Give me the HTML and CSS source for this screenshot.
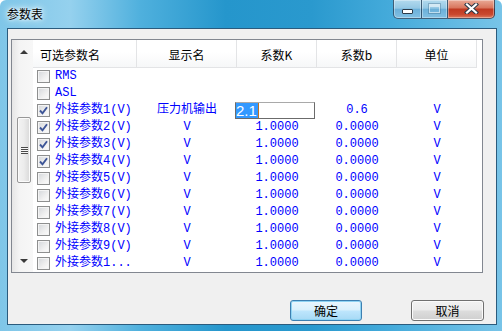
FILE: index.html
```html
<!DOCTYPE html>
<html lang="zh-CN">

<head>
    <meta charset="UTF-8">
    <title>参数表</title>
    <link rel="stylesheet" href="styles.css">
</head>

<body>
    <div class="window">
        <div class="titlebar">
            <span class="title">参数表</span>
            <div class="caption">
                <div class="cbtn cbtn-min"><span class="glyph-min"></span></div>
                <div class="cbtn cbtn-max"><span class="glyph-max"></span></div>
                <div class="cbtn cbtn-close">
                    <svg width="15" height="11" viewBox="0 0 15 11">
                        <path d="M3 1.5 L12 9.5 M12 1.5 L3 9.5" stroke="#2c3a48" stroke-width="4.2" stroke-linecap="square" />
                        <path d="M3 1.5 L12 9.5 M12 1.5 L3 9.5" stroke="#fff" stroke-width="2.2" stroke-linecap="square" />
                    </svg>
                </div>
            </div>
        </div>

        <div class="client">
            <div class="list">
                <!-- scrollbar sits on the left side -->
                <div class="vscroll">
                    <div class="sb-arrow"><i class="up"></i></div>
                    <div class="sb-track">
                        <div class="sb-thumb"><span class="grip"></span></div>
                    </div>
                    <div class="sb-arrow"><i class="down"></i></div>
                </div>

                <div class="grid">
                    <div class="head">
                        <div class="hcell c1 left">可选参数名</div>
                        <div class="hcell c2">显示名</div>
                        <div class="hcell c3">系数K</div>
                        <div class="hcell c4">系数b</div>
                        <div class="hcell c5">单位</div>
                    </div>

                    <div class="row">
                        <div class="c1"><span class="cb"></span>RMS</div>
                        <div class="c2"></div><div class="c3"></div><div class="c4"></div><div class="c5"></div>
                    </div>
                    <div class="row">
                        <div class="c1"><span class="cb"></span>ASL</div>
                        <div class="c2"></div><div class="c3"></div><div class="c4"></div><div class="c5"></div>
                    </div>
                    <div class="row">
                        <div class="c1"><span class="cb on"><svg width="11" height="11" viewBox="0 0 11 11"><path d="M2 5.5 L4.5 8.3 L9 2.2" fill="none" stroke="#3d5597" stroke-width="1.9" /></svg></span>外接参数1(V)</div>
                        <div class="c2">压力机输出</div>
                        <div class="c3 editing"><div class="edit"><span class="sel">2.1</span><span class="caret"></span></div></div>
                        <div class="c4">0.6</div>
                        <div class="c5">V</div>
                    </div>
                    <div class="row">
                        <div class="c1"><span class="cb on"><svg width="11" height="11" viewBox="0 0 11 11"><path d="M2 5.5 L4.5 8.3 L9 2.2" fill="none" stroke="#3d5597" stroke-width="1.9" /></svg></span>外接参数2(V)</div>
                        <div class="c2">V</div><div class="c3">1.0000</div><div class="c4">0.0000</div><div class="c5">V</div>
                    </div>
                    <div class="row">
                        <div class="c1"><span class="cb on"><svg width="11" height="11" viewBox="0 0 11 11"><path d="M2 5.5 L4.5 8.3 L9 2.2" fill="none" stroke="#3d5597" stroke-width="1.9" /></svg></span>外接参数3(V)</div>
                        <div class="c2">V</div><div class="c3">1.0000</div><div class="c4">0.0000</div><div class="c5">V</div>
                    </div>
                    <div class="row">
                        <div class="c1"><span class="cb on"><svg width="11" height="11" viewBox="0 0 11 11"><path d="M2 5.5 L4.5 8.3 L9 2.2" fill="none" stroke="#3d5597" stroke-width="1.9" /></svg></span>外接参数4(V)</div>
                        <div class="c2">V</div><div class="c3">1.0000</div><div class="c4">0.0000</div><div class="c5">V</div>
                    </div>
                    <div class="row">
                        <div class="c1"><span class="cb"></span>外接参数5(V)</div>
                        <div class="c2">V</div><div class="c3">1.0000</div><div class="c4">0.0000</div><div class="c5">V</div>
                    </div>
                    <div class="row">
                        <div class="c1"><span class="cb"></span>外接参数6(V)</div>
                        <div class="c2">V</div><div class="c3">1.0000</div><div class="c4">0.0000</div><div class="c5">V</div>
                    </div>
                    <div class="row">
                        <div class="c1"><span class="cb"></span>外接参数7(V)</div>
                        <div class="c2">V</div><div class="c3">1.0000</div><div class="c4">0.0000</div><div class="c5">V</div>
                    </div>
                    <div class="row">
                        <div class="c1"><span class="cb"></span>外接参数8(V)</div>
                        <div class="c2">V</div><div class="c3">1.0000</div><div class="c4">0.0000</div><div class="c5">V</div>
                    </div>
                    <div class="row">
                        <div class="c1"><span class="cb"></span>外接参数9(V)</div>
                        <div class="c2">V</div><div class="c3">1.0000</div><div class="c4">0.0000</div><div class="c5">V</div>
                    </div>
                    <div class="row">
                        <div class="c1"><span class="cb"></span>外接参数1...</div>
                        <div class="c2">V</div><div class="c3">1.0000</div><div class="c4">0.0000</div><div class="c5">V</div>
                    </div>
                </div>
            </div>

            <div class="actions">
                <div class="btn btn-default">确定</div>
                <div class="btn btn-cancel">取消</div>
            </div>
        </div>
    </div>
</body>

</html>
```

FILE: styles.css
```css
* {
    box-sizing: border-box;
}

body {
    margin: 0;
    background-color: #fff;
    font-family: "Noto Sans CJK SC", sans-serif;
    font-size: 12px;
}

.window {
    width: 502px;
    height: 331px;
    display: flex;
    flex-direction: column;
    border-radius: 6px 6px 0 0;
    overflow: hidden;
    background: linear-gradient(90deg, #7fc6e8 0%, #95d1ee 14%, #4fb0dd 28%, #2596cc 45%, #2a99ce 62%, #45abdb 78%, #78c4e8 100%);
}

/* title bar */

.titlebar {
    flex: none;
    height: 28px;
    display: flex;
    align-items: flex-start;
    padding-left: 7px;
}

.title {
    margin-top: 6px;
    line-height: 16px;
    color: #000;
    text-shadow: 0 0 3px #fff, 0 0 6px #e8f6ff, 0 0 9px #e8f6ff;
}

.caption {
    margin-left: auto;
    margin-right: 7px;
    display: flex;
    height: 19px;
}

.cbtn {
    height: 19px;
    border: 1px solid rgba(30, 55, 80, 0.75);
    border-top: none;
    display: flex;
    justify-content: center;
    background: linear-gradient(#b3daee, #95c8e4 45%, #6cb0d9 52%, #82c0e3);
    box-shadow: inset 0 0 0 1px rgba(255, 255, 255, 0.35);
}

.cbtn-min {
    width: 29px;
    border-radius: 0 0 0 5px;
}

.cbtn-max {
    width: 26px;
    border-left: none;
}

.cbtn-close {
    width: 47px;
    border-left: none;
    border-radius: 0 0 5px 0;
    align-items: center;
    padding-bottom: 1px;
    background: linear-gradient(#e9a996, #d9775f 42%, #c03a22 52%, #c9482e 80%, #dc7a5e);
}

.glyph-min {
    margin-top: 9px;
    width: 11px;
    height: 5px;
    background-color: #fff;
    border: 1px solid #2c3a48;
    border-radius: 1px;
}

.glyph-max {
    margin-top: 4px;
    width: 11px;
    height: 9px;
    border: 1px solid rgba(255, 255, 255, 0.55);
    border-top-width: 3px;
    outline: 1px solid rgba(60, 100, 130, 0.35);
}

/* client area */

.client {
    flex: none;
    margin: 0 5px 0 7px;
    height: 297px;
    border: 1px solid #2b5b7d;
    background-color: #f0f0f0;
    padding: 10px 0 0 3px;
}

.list {
    width: 472px;
    height: 234px;
    border: 1px solid #828790;
    background-color: #fff;
    display: flex;
    overflow: hidden;
}

.vscroll {
    width: 21px;
    display: flex;
    flex-direction: column;
    background: linear-gradient(90deg, #e6e6e6, #f4f4f4 35%, #f7f7f7);
}

.sb-arrow {
    height: 23px;
    display: flex;
    align-items: center;
    justify-content: center;
    padding-left: 3px;
}

.sb-arrow i {
    width: 0;
    height: 0;
    border-left: 4px solid transparent;
    border-right: 4px solid transparent;
}

.sb-arrow .up {
    border-bottom: 4px solid #3a3a3a;
}

.sb-arrow .down {
    border-top: 4px solid #3a3a3a;
}

.sb-track {
    flex: 1;
    padding-left: 5px;
}

.sb-thumb {
    margin-top: 54px;
    width: 14px;
    height: 66px;
    border: 1px solid #979797;
    border-radius: 2px;
    background: linear-gradient(90deg, #f3f3f3, #ececec 50%, #d8d8d8);
    box-shadow: inset 0 0 0 1px #fbfbfb;
    display: flex;
    align-items: center;
    justify-content: center;
}

.grip {
    width: 7px;
    height: 7px;
    background: repeating-linear-gradient(#4a4a4a 0, #4a4a4a 1px, #f6f6f6 1px, #f6f6f6 2px);
}

.grid {
    flex: 1;
}

.head {
    display: flex;
    height: 28px;
}

.hcell {
    height: 28px;
    padding-top: 4px;
    line-height: 22px;
    text-align: center;
    color: #000;
    border-right: 1px solid #e3e4e6;
    border-bottom: 1px solid #e3e4e6;
    background: linear-gradient(#ffffff, #ffffff 45%, #f6f7f8);
}

.hcell.left {
    text-align: left;
    padding-left: 7px;
}

.c1 {
    width: 104px;
}

.c2 {
    width: 100px;
}

.c3,
.c4,
.c5 {
    width: 80px;
}

.row {
    display: flex;
    height: 17px;
    line-height: 17px;
    color: #0000ff;
    font-family: "Liberation Mono", "Noto Sans CJK SC", monospace;
    font-size: 12px;
}

.row > div {
    text-align: center;
    white-space: nowrap;
    overflow: hidden;
}

.row > .editing {
    overflow: visible;
}

.row .c1 {
    display: flex;
    align-items: center;
    padding-left: 4px;
    text-align: left;
}

.cb {
    flex: none;
    width: 13px;
    height: 13px;
    margin-right: 5px;
    border: 1px solid #8e8f8f;
    background: linear-gradient(135deg, #d3d6da, #f0f0f0 60%, #fdfdfd);
    box-shadow: inset 0 0 0 1px #f4f4f4;
}

.cb svg {
    display: block;
}

/* cell in edit mode */

.edit {
    margin-left: -2px;
    width: 80px;
    height: 17px;
    border: 1px solid #6b6b6b;
    border-top-color: #a9a9a9;
    background-color: #fff;
    display: flex;
    text-align: left;
    overflow: hidden;
}

.sel {
    background-color: #3399ff;
    color: #fff;
    font-family: "Liberation Sans", sans-serif;
    font-size: 15px;
    line-height: 15px;
    padding: 0 1px 0 0;
}

.caret {
    width: 1px;
    height: 15px;
    background-color: #c0701e;
}

/* buttons */

.actions {
    display: flex;
    margin-top: 27px;
    padding-left: 279px;
    gap: 49px;
}

.btn {
    width: 72px;
    height: 21px;
    border: 1px solid #707070;
    border-radius: 3px;
    text-align: center;
    line-height: 19px;
    color: #000;
    background: linear-gradient(#f2f2f2, #ebebeb 48%, #dddddd 52%, #cfcfcf);
    box-shadow: inset 0 0 0 1px #fbfbfb;
}

.btn-default {
    border-color: #3c7fb1;
    background: linear-gradient(#eaf6fd, #d9f0fc 48%, #bee6fd 52%, #a7d9f5);
    box-shadow: inset 0 0 0 1px #8fd3f3;
}

.btn-cancel {
    width: 73px;
}
```
